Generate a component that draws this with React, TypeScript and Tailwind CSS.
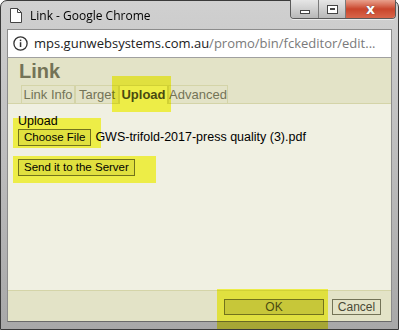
import React from "react";

const TABS: { label: string; width: string }[] = [
  { label: "Link Info", width: "w-[54px]" },
  { label: "Target", width: "w-[44px]" },
  { label: "Upload", width: "w-[49px]" },
  { label: "Advanced", width: "w-[60px]" },
];

function DocIcon() {
  return (
    <svg width="12" height="15" viewBox="0 0 12 15" className="shrink-0" aria-hidden>
      <path d="M0.5 0.5h7l4 4v10h-11z" fill="#fff" stroke="#444" />
      <path d="M7.5 0.5v4h4" fill="none" stroke="#444" />
    </svg>
  );
}

function InfoIcon() {
  return (
    <svg width="15" height="15" viewBox="0 0 15 15" className="shrink-0" aria-hidden>
      <circle cx="7.5" cy="7.5" r="6.6" fill="none" stroke="#333" strokeWidth="1.3" />
      <rect x="6.8" y="6.2" width="1.5" height="4.8" fill="#333" />
      <rect x="6.8" y="3.6" width="1.5" height="1.5" fill="#333" />
    </svg>
  );
}

function WindowControls() {
  return (
    <div className="flex h-[19px] self-start -mt-px rounded-b-[4px] border border-t-0 border-[#5a5a5a] overflow-hidden shadow-[0_1px_0_rgba(255,255,255,0.6)]">
      <div className="w-[28px] flex items-center justify-center bg-gradient-to-b from-[#e6e6e6] to-[#b8b8b8] border-r border-[#7a7a7a]">
        <div className="w-[10px] h-[4px] mt-[5px] bg-white border border-[#444]" />
      </div>
      <div className="w-[27px] flex items-center justify-center bg-gradient-to-b from-[#e6e6e6] to-[#b8b8b8] border-r border-[#7a7a7a]">
        <div className="w-[11px] h-[9px] bg-white border border-[#444] flex items-center justify-center">
          <div className="w-[5px] h-[2px] border border-[#444]" />
        </div>
      </div>
      <div className="w-[49px] flex items-center justify-center bg-gradient-to-b from-[#e8a08c] via-[#c9452b] to-[#d8664a]">
        <span className="text-white font-bold text-[14px] leading-none [text-shadow:0_0_1px_#333] font-['DejaVu_Sans',sans-serif]">
          x
        </span>
      </div>
    </div>
  );
}

// Yellow marker annotations: multiplied over the page so text stays dark.
function Highlight({ className }: { className: string }) {
  return (
    <div className={"absolute bg-[#fcfc50] mix-blend-multiply pointer-events-none " + className} />
  );
}

export default function App() {
  return (
    <div className="w-[400px] h-[330px] bg-white font-['Liberation_Sans',Arial,sans-serif]">
      <div className="relative isolate w-[399px] h-[330px] flex flex-col rounded-t-[7px] border border-[#3a3a3a] bg-gradient-to-b from-[#d0d0d0] via-[#bcbcbc] to-[#a8a8a8] px-[6px] pb-[7px]">
        {/* title bar */}
        <div className="h-[28px] flex items-start">
          <div className="flex items-center gap-[8px] pl-[3px] pt-[7px]">
            <DocIcon />
            <span className="text-[12px] leading-none text-black font-['Open_Sans',sans-serif]">
              Link - Google Chrome
            </span>
          </div>
          <div className="ml-auto mr-[-4px]">
            <WindowControls />
          </div>
        </div>

        {/* address bar */}
        <div className="h-[29px] flex items-center gap-[6px] bg-white border border-[#8c8c8c] border-b-[#a0a0a0] pl-[5px] overflow-hidden">
          <InfoIcon />
          <span className="text-[13px] leading-none text-[#222] font-['Open_Sans',sans-serif] whitespace-nowrap">
            mps.gunwebsystems.com.au
            <span className="text-[#7a7a7a]">/promo/bin/fckeditor/edit...</span>
          </span>
        </div>

        {/* dialog */}
        <div className="flex-1 flex flex-col border-x border-[#8c8c8c] border-b border-b-[#6a6a6a]">
          <div className="bg-[#e3e3c7] pt-[2px]">
            <div className="pl-[11px] text-[20px] font-bold leading-[22px] text-[#737357]">Link</div>
            <div className="flex pl-[13px] mt-[3px] border-b border-[#d4d4a8]">
              {TABS.map(({ label, width }) => {
                const active = label === "Upload";
                return (
                  <div
                    key={label}
                    className={
                      active
                        ? width + " h-[19px] -mb-px flex items-center justify-center text-[13px] font-bold text-[#4a4a36] bg-[#f0f0e2] border border-b-0 border-[#d4d4a8]"
                        : width + " h-[18px] flex items-center justify-center text-[13px] text-[#737357] bg-[#e3e3c7] border border-b-0 border-[#d4d4a8]"
                    }
                  >
                    {label}
                  </div>
                );
              })}
            </div>
          </div>

          <div className="flex-1 bg-[#f0f0e2] pl-[10px] pt-[11px] text-[12.5px] text-black">
            <div className="leading-[13px]">Upload</div>
            <div className="flex items-center gap-[4px]">
              <button className="h-[17px] px-[5px] text-[11.5px] leading-none text-black bg-[#e3e3c7] border border-[#737357]">
                Choose File
              </button>
              <span className="whitespace-nowrap">GWS-trifold-2017-press quality (3).pdf</span>
            </div>
            <button className="mt-[12px] h-[17px] px-[5px] text-[11.5px] leading-none text-black bg-[#e3e3c7] border border-[#737357]">
              Send it to the Server
            </button>
          </div>

          <div className="h-[31px] bg-[#e3e3c7] border-t border-[#d4d4a8] flex items-center justify-end gap-[8px] pr-[10px] pt-[2px]">
            <button className="w-[100px] h-[16px] text-[12px] leading-none text-[#4a4a36] bg-[#cacab4] border border-[#737357]">
              OK
            </button>
            <button className="w-[49px] h-[16px] text-[12px] leading-none text-[#4a4a36] bg-[#e3e3c7] border border-[#737357]">
              Cancel
            </button>
          </div>
        </div>

        {/* yellow annotation highlights */}
        <Highlight className="left-[111px] top-[75px] w-[59px] h-[36px]" />
        <Highlight className="left-[12px] top-[117px] w-[88px] h-[30px]" />
        <Highlight className="left-[12px] top-[155px] w-[143px] h-[27px]" />
        <Highlight className="left-[216px] top-[288px] w-[111px] h-[40px]" />
      </div>
    </div>
  );
}
